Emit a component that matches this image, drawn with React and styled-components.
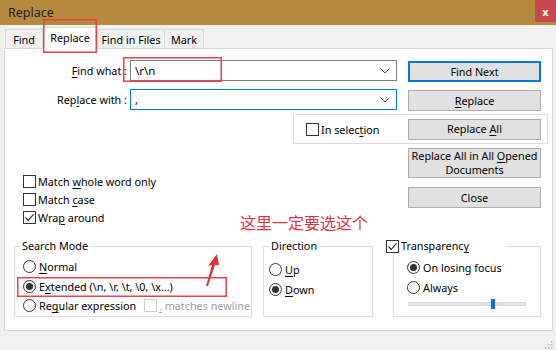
import React from "react";
import styled, { createGlobalStyle } from "styled-components";

const FONT = `"Noto Sans", "Liberation Sans", sans-serif`;

const Global = createGlobalStyle`
  html, body { margin: 0; padding: 0; background: #f0f0f0; }
  body { font-family: ${FONT}; overflow: hidden; }
  #root { width: 556px; height: 350px; }
`;

const Window = styled.div`
  position: relative;
  width: 556px;
  height: 350px;
  display: flex;
  flex-direction: column;
  background: #f0f0f0;
  font-family: ${FONT};
  font-size: 10.8px;
  color: #000;
  overflow: hidden;
`;

const TitleBar = styled.div`
  height: 25px;
  flex: none;
  background: #b78b3d;
  display: flex;
  align-items: flex-start;
`;

const Title = styled.div`
  flex: 1;
  font-size: 12.5px;
  line-height: 25px;
  padding-left: 8px;
  color: #1c1c1c;
`;

const CloseBtn = styled.div`
  width: 21px;
  height: 22px;
  background: #c84a4c;
  color: #fff;
  font-size: 11px;
  font-weight: bold;
  display: flex;
  align-items: center;
  justify-content: center;
`;

const Body = styled.div`
  flex: 1;
  display: flex;
  flex-direction: column;
  padding: 0 3px 0 4px;
`;

const TabStrip = styled.div`
  height: 24px;
  margin-bottom: -1px;
  flex: none;
  display: flex;
  align-items: flex-end;
  padding-left: 1px;
  position: relative;
  z-index: 1;
`;

const Tab = styled.div`
  box-sizing: border-box;
  width: ${(p) => p.$w}px;
  height: ${(p) => (p.$active ? 22 : 20)}px;
  padding-bottom: ${(p) => (p.$active ? 2 : 0)}px;
  background: ${(p) => (p.$active ? "#fff" : "#f0f0f0")};
  border: 1px solid #d9d9d9;
  border-bottom: ${(p) => (p.$active ? "none" : "1px solid #d9d9d9")};
  display: flex;
  align-items: center;
  justify-content: center;
  white-space: nowrap;
  position: relative;
  z-index: ${(p) => (p.$active ? 2 : 1)};
  & + & {
    margin-left: -1px;
  }
`;

const Panel = styled.div`
  flex: none;
  height: 283px;
  box-sizing: border-box;
  background: #fff;
  border: 1px solid #d9d9d9;
  display: flex;
  flex-direction: column;
`;

const TopArea = styled.div`
  display: flex;
  padding: 11px 11px 0 0;
`;

const LeftCol = styled.div`
  width: 392px;
  display: flex;
  flex-direction: column;
`;

const FieldRow = styled.div`
  display: flex;
  align-items: center;
  height: 21px;
  margin-top: ${(p) => p.$mt || 0}px;
`;

const FieldLabel = styled.div`
  width: 122px;
  margin-right: 3px;
  text-align: right;
  white-space: nowrap;
`;

const Combo = styled.div`
  width: 267px;
  height: 21px;
  box-sizing: border-box;
  border: 1px solid ${(p) => (p.$focused ? "#0078d7" : "#7a7a7a")};
  background: #fff;
  display: flex;
  align-items: center;
  padding: 0 6px 0 4px;
  font-size: 11.5px;
`;

const ComboText = styled.span`
  flex: 1;
`;

const OptionList = styled.div`
  margin-top: 62px;
  padding-left: 18px;
  display: flex;
  flex-direction: column;
`;

const OptionRow = styled.div`
  height: ${(p) => p.$h || 18}px;
  display: flex;
  align-items: center;
  white-space: nowrap;
  color: ${(p) => (p.$disabled ? "#a0a0a0" : "#000")};
`;

const RowLabel = styled.span`
  display: inline-block;
  width: ${(p) => p.$w}px;
  flex: none;
`;

const Box = styled.span`
  width: 13px;
  height: 13px;
  box-sizing: border-box;
  border: 1px solid ${(p) => (p.$disabled ? "#cccccc" : "#333")};
  background: #fff;
  display: inline-flex;
  align-items: center;
  justify-content: center;
  flex: none;
  margin-right: 2px;
`;

const Round = styled(Box)`
  border-radius: 50%;
  margin-right: 3px;
`;

const Dot = styled.span`
  width: 7px;
  height: 7px;
  border-radius: 50%;
  background: #333;
`;

const K = styled.span`
  text-decoration: underline;
  text-underline-offset: 2px;
`;

const RightCol = styled.div`
  width: 133px;
  margin: 1px 0 0 11px;
  display: flex;
  flex-direction: column;
`;

const Button = styled.div`
  box-sizing: border-box;
  width: 133px;
  height: ${(p) => p.$h || 21}px;
  margin-top: ${(p) => p.$mt || 0}px;
  background: #e1e1e1;
  border: ${(p) => (p.$default ? "2px solid #0078d7" : "1px solid #adadad")};
  display: flex;
  flex-direction: column;
  align-items: center;
  justify-content: center;
  text-align: center;
  line-height: 14px;
  white-space: nowrap;
  flex: none;
`;

const SelectionBox = styled.div`
  box-sizing: border-box;
  height: 30px;
  margin: 3px -7px 0 -115px;
  border: 1px solid #dcdcdc;
  display: flex;
  align-items: center;
  padding: 0 6px 0 12px;
  & > ${Button} {
    margin-left: auto;
  }
`;

const Groups = styled.div`
  display: flex;
  margin-top: 13px;
  padding-left: 9px;
`;

const Group = styled.fieldset`
  box-sizing: border-box;
  width: ${(p) => p.$w}px;
  height: 78px;
  margin: 0 0 0 ${(p) => p.$ml || 0}px;
  padding: 0;
  border: 1px solid #dcdcdc;
  min-width: 0;
`;

const GroupBody = styled.div`
  padding: ${(p) => p.$pt}px 0 0 ${(p) => p.$pl}px;
  display: flex;
  flex-direction: column;
`;

const Legend = styled.legend`
  padding: 0 2px;
  margin-left: 5px;
  line-height: 14px;
  white-space: nowrap;
`;

const CheckLegend = styled.legend`
  padding: 0;
  margin-left: -8px;
  width: 120px;
  line-height: 14px;
  display: flex;
  align-items: center;
  white-space: nowrap;
`;

const SliderRow = styled.div`
  height: 14px;
  margin-left: 1px;
  width: 118px;
  position: relative;
  display: flex;
  align-items: center;
`;

const Track = styled.div`
  width: 100%;
  height: 4px;
  box-sizing: border-box;
  background: #e7e7e7;
  border: 1px solid #d6d6d6;
`;

const Thumb = styled.div`
  position: absolute;
  top: 2px;
  width: 4px;
  height: 10px;
  background: #0078d7;
`;

const StatusStrip = styled.div`
  flex: 1;
  display: flex;
  justify-content: flex-end;
  align-items: flex-end;
  padding: 0 0 1px 0;
`;

const RedRect = styled.div`
  position: absolute;
  z-index: 5;
  box-sizing: border-box;
  background: transparent;
  box-shadow: inset 0 0 0 1.5px #e8404c;
  pointer-events: none;
`;

const Note = styled.div`
  position: absolute;
  left: 240px;
  top: 211px;
  font-family: "Noto Sans CJK SC", sans-serif;
  font-size: 16px;
  line-height: 22px;
  color: #d9363e;
  white-space: nowrap;
`;

const ArrowSvg = styled.svg`
  position: absolute;
  left: 200px;
  top: 245px;
`;

const Tick = () => (
  <svg width="11" height="11" viewBox="0 0 11 11">
    <polyline points="1.5,5.5 4.2,8.3 9.6,2.4" fill="none" stroke="#333" strokeWidth="1.2" />
  </svg>
);

const Check = ({ checked, disabled, children, h }) => (
  <OptionRow $disabled={disabled} $h={h}>
    <Box $disabled={disabled}>{checked && <Tick />}</Box>
    <span>{children}</span>
  </OptionRow>
);

const Radio = ({ checked, children, h }) => (
  <OptionRow $h={h}>
    <Round>{checked && <Dot />}</Round>
    <span>{children}</span>
  </OptionRow>
);

const Chevron = () => (
  <svg width="10" height="6" viewBox="0 0 10 6">
    <polyline points="0.5,0.5 5,5 9.5,0.5" fill="none" stroke="#555" strokeWidth="1" />
  </svg>
);

export default function App() {
  return (
    <>
      <Global />
      <Window>
        <TitleBar>
          <Title>Replace</Title>
          <CloseBtn>x</CloseBtn>
        </TitleBar>
        <Body>
          <TabStrip>
            <Tab $w={38}>Find</Tab>
            <Tab $w={56} $active>
              Replace
            </Tab>
            <Tab $w={68}>Find in Files</Tab>
            <Tab $w={40}>Mark</Tab>
          </TabStrip>
          <Panel>
            <TopArea>
              <LeftCol>
                <FieldRow>
                  <FieldLabel>
                    <K>F</K>ind what :
                  </FieldLabel>
                  <Combo>
                    <ComboText>\r\n</ComboText>
                    <Chevron />
                  </Combo>
                </FieldRow>
                <FieldRow $mt={8}>
                  <FieldLabel>
                    Rep<K>l</K>ace with :
                  </FieldLabel>
                  <Combo $focused>
                    <ComboText>,</ComboText>
                    <Chevron />
                  </Combo>
                </FieldRow>
                <OptionList>
                  <Check>
                    Match <K>w</K>hole word only
                  </Check>
                  <Check>
                    Match <K>c</K>ase
                  </Check>
                  <Check checked>
                    Wra<K>p</K> around
                  </Check>
                </OptionList>
              </LeftCol>
              <RightCol>
                <Button $default>Find Next</Button>
                <Button $mt={8}>
                  <span>
                    <K>R</K>eplace
                  </span>
                </Button>
                <SelectionBox>
                  <Check>
                    In selec<K>t</K>ion
                  </Check>
                  <Button>
                    <span>
                      Replace <K>A</K>ll
                    </span>
                  </Button>
                </SelectionBox>
                <Button $mt={4} $h={30}>
                  <span>
                    Replace All in All <K>O</K>pened
                  </span>
                  <span>Documents</span>
                </Button>
                <Button $mt={9}>Close</Button>
              </RightCol>
            </TopArea>
            <Groups>
              <Group $w={238}>
                <Legend>Search Mode</Legend>
                <GroupBody $pt={4} $pl={8}>
                  <Radio h={19.5}>
                    <K>N</K>ormal
                  </Radio>
                  <Radio h={19.5} checked>
                    E<K>x</K>tended (\n, \r, \t, \0, \x...)
                  </Radio>
                  <OptionRow $h={19.5}>
                    <Round />
                    <RowLabel $w={105}>
                      Re<K>g</K>ular expression
                    </RowLabel>
                    <Check disabled h={19.5}>
                      <K>.</K> matches newline
                    </Check>
                  </OptionRow>
                </GroupBody>
              </Group>
              <Group $w={110} $ml={11}>
                <Legend>Direction</Legend>
                <GroupBody $pt={6} $pl={5}>
                  <Radio h={20}>
                    <K>U</K>p
                  </Radio>
                  <Radio h={20} checked>
                    <K>D</K>own
                  </Radio>
                </GroupBody>
              </Group>
              <Group $w={148} $ml={20}>
                <CheckLegend>
                  <Box>
                    <Tick />
                  </Box>
                  <span>
                    Transparenc<K>y</K>
                  </span>
                </CheckLegend>
                <GroupBody $pt={4} $pl={13}>
                  <Radio h={20} checked>
                    On losing focus
                  </Radio>
                  <Radio h={20}>Always</Radio>
                  <SliderRow>
                    <Track />
                    <Thumb style={{ left: "83px" }} />
                  </SliderRow>
                </GroupBody>
              </Group>
            </Groups>
          </Panel>
          <StatusStrip>
            <svg width="10" height="10" viewBox="0 0 10 10">
              {[
                [8, 2],
                [8, 5],
                [5, 5],
                [8, 8],
                [5, 8],
                [2, 8],
              ].map(([x, y], i) => (
                <rect key={i} x={x} y={y} width="1.5" height="1.5" fill="#b5b5b5" />
              ))}
            </svg>
          </StatusStrip>
        </Body>

        <RedRect style={{ left: 43, top: 19, width: 54, height: 34 }} />
        <RedRect style={{ left: 123, top: 57, width: 99, height: 25 }} />
        <RedRect style={{ left: 17, top: 277, width: 210, height: 20 }} />
        <Note>这里一定要选这个</Note>
        <ArrowSvg width="25" height="45" viewBox="0 0 25 45">
          <polygon points="17,9 8,21 12,20 6,41 8,41 15,20 19,20" fill="#e0323a" />
        </ArrowSvg>
      </Window>
    </>
  );
}
